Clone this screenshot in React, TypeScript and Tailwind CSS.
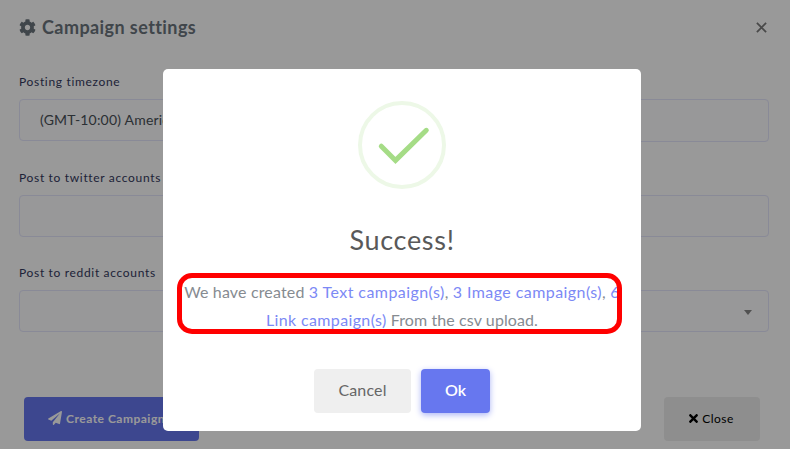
import React from "react";
import { FaCog, FaPaperPlane, FaTimes } from "react-icons/fa";

const fieldBox = "rounded-[4px] border border-[#e4e6fc] bg-[#fdfdff]";
const labelText =
  "block h-[18px] whitespace-nowrap text-[12px] leading-[18px] font-normal tracking-[0.67px] text-[#34395e]";
const linkText = "tracking-[0.43px] text-[#7c89f5]";

function SettingsForm() {
  return (
    <main className="flex h-full flex-col bg-white pt-[15px] pl-[19px] pr-[21px]">
      <header className="flex h-[24px] items-center justify-between text-[#6c757d]">
        <h1 className="flex items-center gap-[6px] whitespace-nowrap text-[18px] font-bold leading-[24px] tracking-[0.42px]">
          <FaCog className="size-[17px]" />
          Campaign settings
        </h1>
        <svg className="mr-[2px] size-[11px]" viewBox="0 0 11 11" fill="none" stroke="#7b7b7b" strokeWidth="1.8">
          <path d="M.9.9 10.1 10.1M10.1.9.9 10.1" />
        </svg>
      </header>

      <section className="mt-[34px] h-[96px]">
        <label className={labelText}>Posting timezone</label>
        <div className="mt-[8px] flex gap-[20px]">
          <div className={`${fieldBox} flex h-[42px] w-[365px] items-center pb-px pl-[20px]`}>
            <span className="whitespace-nowrap text-[14px] text-[#495057] tracking-[0.2px]">(GMT-10:00) America/Adak</span>
          </div>
          <div className={`${fieldBox} h-[43px] flex-1`} />
        </div>
      </section>

      <section className="h-[95px]">
        <label className={labelText}>Post to twitter accounts</label>
        <div className={`${fieldBox} mt-[8px] h-[42px]`} />
      </section>

      <section className="h-[133px]">
        <label className={labelText}>Post to reddit accounts</label>
        <div className={`${fieldBox} mt-[8px] flex h-[42px] items-center justify-end pt-[2px] pr-[16px]`}>
          <span className="border-x-[4px] border-t-[5px] border-x-transparent border-t-[#888]" />
        </div>
      </section>

      <footer className="flex shrink-0 justify-between pl-[5px] pr-[9px] text-[12px] tracking-[0.5px]">
        <button className="flex h-[44px] w-[175px] items-center gap-[4px] whitespace-nowrap rounded-[4px] bg-[#6777ef] pl-[24px] font-bold text-white">
          <FaPaperPlane className="size-[14px] -mt-[2px]" />
          Create Campaign
        </button>
        <button className="flex h-[44px] w-[96px] items-center justify-center gap-[2px] rounded-[4px] bg-[#ededed] pr-[3px] text-black">
          <FaTimes className="size-[13px] -mt-px" />
          Close
        </button>
      </footer>
    </main>
  );
}

function SuccessDialog() {
  return (
    <div className="flex h-[362px] w-[478px] flex-col items-center rounded-[5px] bg-white pt-[32px]">
      <svg className="size-[88px] shrink-0" viewBox="0 0 88 88" fill="none">
        <circle cx="44" cy="44" r="42" stroke="#edf8e7" strokeWidth="4" />
        <path d="M23.3 45.2 37.5 59.4 68.3 29.3" stroke="#a5dc86" strokeWidth="5" strokeLinecap="round" />
      </svg>
      <h2 className="mt-[34px] h-[34px] whitespace-nowrap text-[27px] leading-[34px] tracking-[0.7px] text-[#595959]">Success!</h2>
      <div className="relative mt-[21px] w-full text-center text-[16px] leading-[28px] text-[#868b91]">
        <p className="whitespace-nowrap tracking-[0.16px]">
          We have created <a className={linkText}>3 Text campaign(s)</a>, <a className={linkText}>3 Image campaign(s)</a>, <a className={linkText}>6</a>
        </p>
        <p className="whitespace-nowrap tracking-[0.1px]">
          <a className="tracking-[0.36px] text-[#7c89f5]">Link campaign(s)</a> From the csv upload.
        </p>
        <div className="absolute left-[14px] top-[-5px] h-[61px] w-[445px] rounded-[15px] border-[5px] border-[#ff0000]" />
      </div>
      <div className="mt-[35px] flex gap-[10px] text-[16px]">
        <button className="h-[44px] w-[97px] rounded-[4px] bg-[#efefef] pb-[2px] tracking-[0.15px] text-[#666]">Cancel</button>
        <button className="h-[44px] w-[69px] rounded-[4px] bg-[#6777ef] pb-[2px] font-semibold text-white shadow-[0_2px_6px_#acb5f6]">Ok</button>
      </div>
    </div>
  );
}

export default function App() {
  return (
    <div className="relative h-[449px] w-[790px] overflow-hidden font-['Lato','Liberation_Sans',sans-serif]">
      <SettingsForm />
      <div className="absolute inset-0 flex items-start bg-black/40 pl-[163px] pt-[69px]">
        <SuccessDialog />
      </div>
    </div>
  );
}
